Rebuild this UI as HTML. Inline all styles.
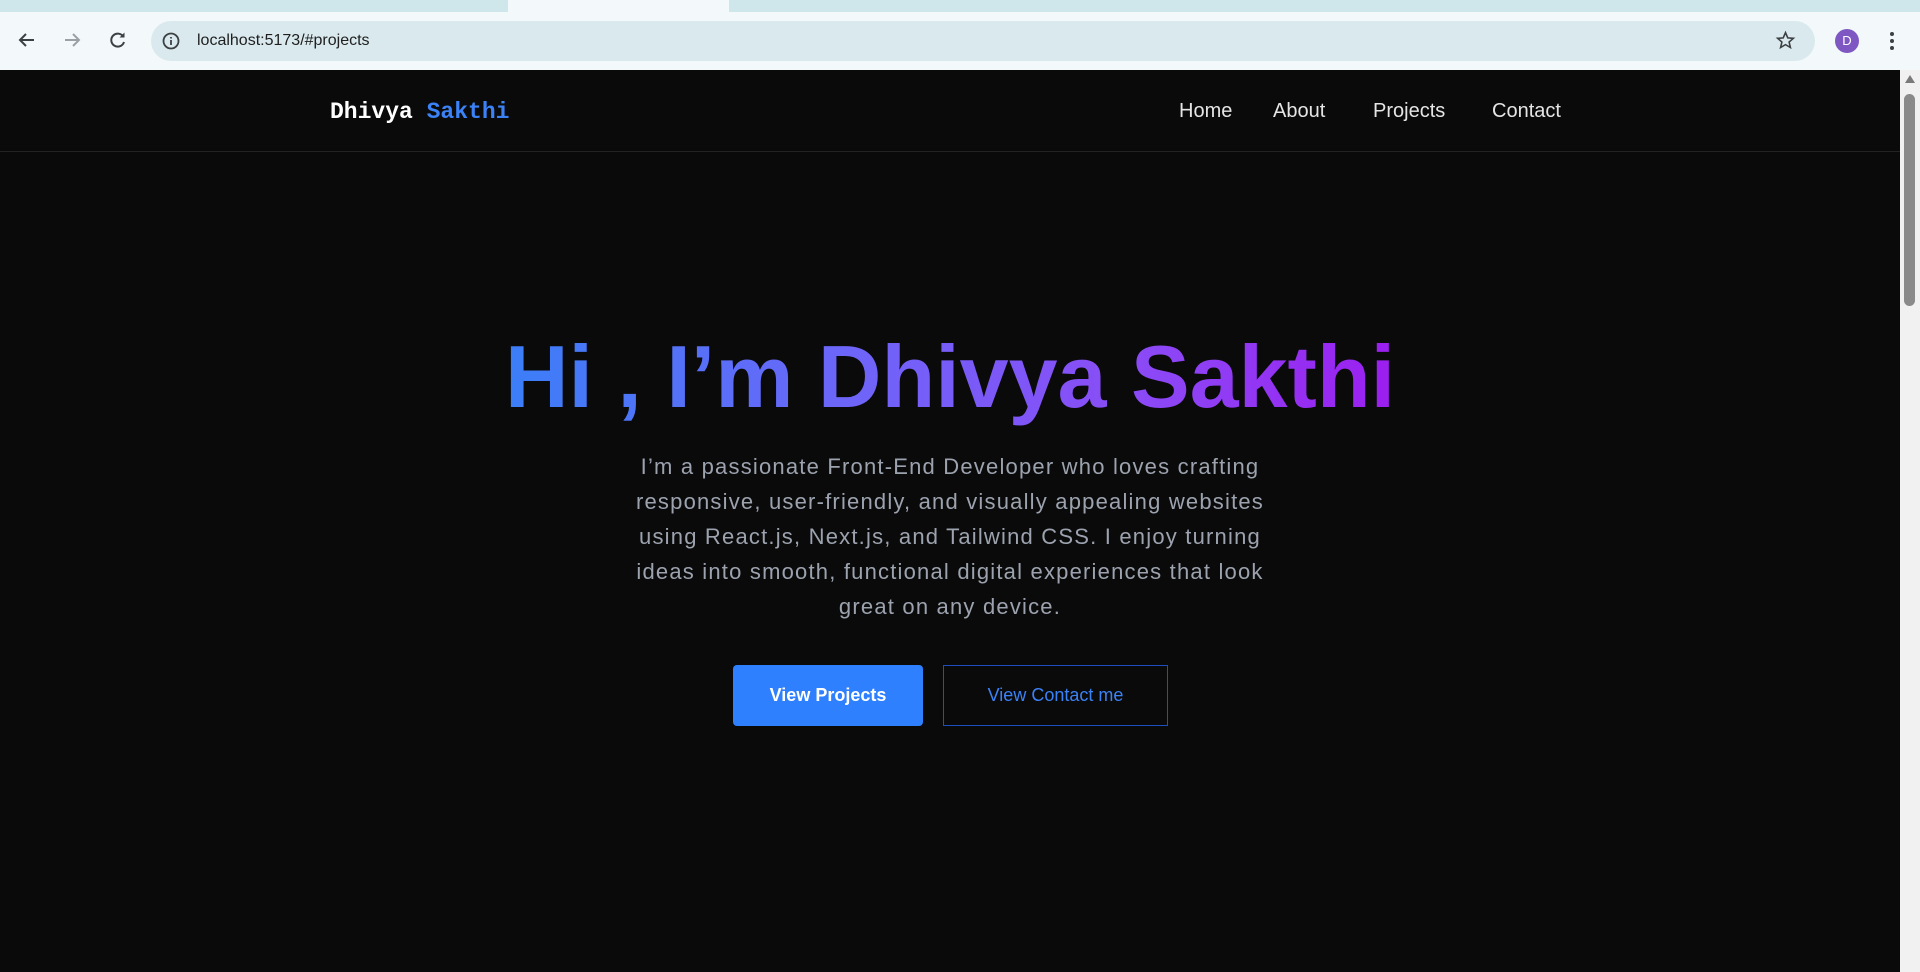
<!DOCTYPE html>
<html><head><meta charset="utf-8"><style>
*{margin:0;padding:0;box-sizing:border-box}
body{width:1920px;height:972px;overflow:hidden;background:#0a0a0a;font-family:"Liberation Sans",sans-serif;position:relative}
.tabs{position:absolute;left:0;top:0;width:1920px;height:12px;background:#cfe6eb}
.tabs .a{position:absolute;left:508px;top:0;width:221px;height:12px;background:#f3f9fb}
.tb{position:absolute;left:0;top:12px;width:1920px;height:58px;background:#f3f9fb}
.addr{position:absolute;left:151px;top:21px;width:1664px;height:40px;border-radius:20px;background:#dae9ee}
.url{position:absolute;left:197px;top:32px;font-size:16px;color:#1f1f1f}
.ic{position:absolute}
.page{position:absolute;left:0;top:70px;width:1900px;height:902px;background:#0a0a0a}
.sb{position:absolute;left:1900px;top:70px;width:20px;height:902px;background:#f1f1f1}
.thumb{position:absolute;left:1904px;top:94px;width:11px;height:212px;background:#8a8a8a;border-radius:6px}
nav{position:absolute;left:0;top:70px;width:1900px;height:82px;border-bottom:1px solid #232323}
.logo{position:absolute;left:330px;top:29px;font-family:"Liberation Mono",monospace;font-weight:700;font-size:23px;color:#fff}
.logo span{color:#3b82f6}
.nl{position:absolute;top:30px;font-size:20px;color:#e5e5e5}
h1{position:absolute;left:0;width:1900px;top:322px;text-align:center;font-size:88px;font-weight:700;line-height:110px}
h1 span{background:linear-gradient(to right,#3b7ef8,#6f64f8 40%,#8a4cf6 70%,#9c1ef0);-webkit-background-clip:text;background-clip:text;color:transparent}
p{position:absolute;left:0;width:1900px;top:449px;text-align:center;font-size:22px;letter-spacing:1.2px;line-height:35px;color:#9ca3af;white-space:nowrap}
.b1{position:absolute;left:733px;top:665px;width:190px;height:61px;background:#2f80ff;border-radius:4px;color:#fff;font-weight:700;font-size:18px;text-align:center;line-height:61px}
.b2{position:absolute;left:943px;top:665px;width:225px;height:61px;border:1px solid #1e4fc0;color:#3b82f6;font-size:18px;text-align:center;line-height:59px}
</style></head><body>
<div class="tabs"><div class="a"></div></div>
<div class="tb"></div>
<div class="addr"></div>
<svg class="ic" style="left:17px;top:30px" width="20" height="20" viewBox="0 0 20 20"><path d="M17 10H4M9 4l-6 6 6 6" stroke="#3c4043" stroke-width="2" fill="none"/></svg>
<svg class="ic" style="left:62px;top:30px" width="20" height="20" viewBox="0 0 20 20"><path d="M3 10h13M11 4l6 6-6 6" stroke="#9aa0a6" stroke-width="2" fill="none"/></svg>
<svg class="ic" style="left:108px;top:30px" width="20" height="20" viewBox="0 0 20 20"><path d="M15.5 7A6.5 6.5 0 1 0 16 12" stroke="#3c4043" stroke-width="2" fill="none"/><path d="M16.5 2.5v5h-5z" fill="#3c4043"/></svg>
<svg class="ic" style="left:161px;top:31px" width="20" height="20" viewBox="0 0 20 20"><circle cx="10" cy="10" r="7.5" stroke="#3c4043" stroke-width="1.8" fill="none"/><path d="M10 9v5M10 6v1.5" stroke="#3c4043" stroke-width="1.8"/></svg>
<div class="url">localhost:5173/#projects</div>
<svg class="ic" style="left:1775px;top:30px" width="21" height="21" viewBox="0 0 24 24"><path d="M12 3l2.6 6 6.4.5-4.9 4.2 1.5 6.3L12 16.7 6.4 20l1.5-6.3L3 9.5 9.4 9z" stroke="#3c4043" stroke-width="1.8" fill="none"/></svg>
<div class="ic" style="left:1835px;top:29px;width:24px;height:24px;border-radius:12px;background:#7e57c2;color:#fff;font-size:13px;text-align:center;line-height:24px">D</div>
<svg class="ic" style="left:1888px;top:30px" width="8" height="22"><circle cx="4" cy="4" r="2" fill="#3c4043"/><circle cx="4" cy="11" r="2" fill="#3c4043"/><circle cx="4" cy="18" r="2" fill="#3c4043"/></svg>
<div class="page"></div>
<div class="sb"></div><div class="thumb"></div>
<svg class="ic" style="left:1904px;top:74px" width="12" height="10"><path d="M6 1l5 8H1z" fill="#7a7a7a"/></svg>
<nav>
<div class="logo">Dhivya <span>Sakthi</span></div>
<div class="nl" style="left:1179px">Home</div>
<div class="nl" style="left:1273px">About</div>
<div class="nl" style="left:1373px">Projects</div>
<div class="nl" style="left:1492px">Contact</div>
</nav>
<h1><span>Hi , I’m Dhivya Sakthi</span></h1>
<p>I’m a passionate Front-End Developer who loves crafting<br>responsive, user-friendly, and visually appealing websites<br>using React.js, Next.js, and Tailwind CSS. I enjoy turning<br>ideas into smooth, functional digital experiences that look<br>great on any device.</p>
<div class="b1">View Projects</div>
<div class="b2">View Contact me</div>
</body></html>
